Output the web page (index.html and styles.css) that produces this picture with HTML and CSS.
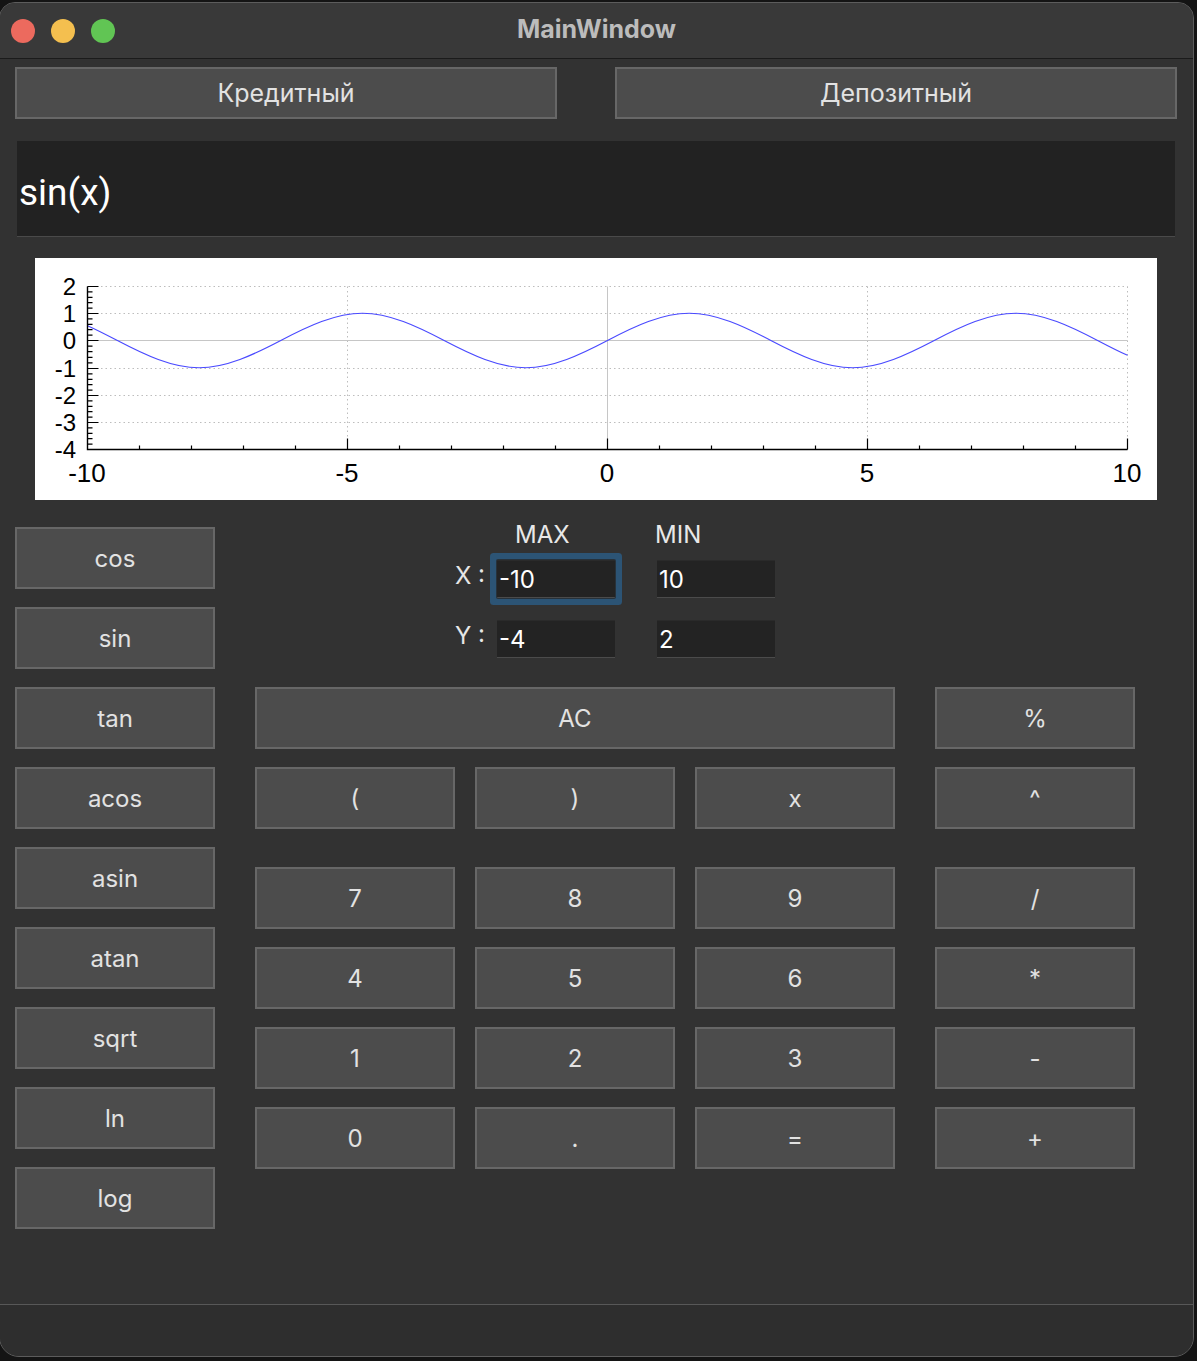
FILE: index.html
```html
<!DOCTYPE html>
<html lang="ru">
<head>
<meta charset="utf-8">
<title>MainWindow</title>
<link rel="stylesheet" href="styles.css">
</head>
<body>
<div class="window">
  <header class="titlebar">
    <div class="lights">
      <span class="light red"></span>
      <span class="light yellow"></span>
      <span class="light green"></span>
    </div>
    <div class="title">MainWindow</div>
    <div></div>
  </header>

  <main class="main">
    <div class="mode-row">
      <button class="btn mode-btn">Кредитный</button>
      <button class="btn mode-btn">Депозитный</button>
    </div>

    <div class="display">sin(x)</div>

    <div class="plot-wrap">
      <svg class="plot" width="1122" height="242" viewBox="0 0 1122 242">
        <path class="grid-dot" d="M52.5 28.5H1092.5M52.5 55.5H1092.5M52.5 110.5H1092.5M52.5 137.5H1092.5M52.5 164.5H1092.5M312.5 28.5V191.5M832.5 28.5V191.5M1092.5 28.5V191.5"/>
        <path class="grid-zero" d="M52.5 82.5H1092.5M572.5 28.5V191.5"/>
        <path class="curve" transform="matrix(52 0 0 -27.25 572.5 82.5)" d="M-10 0.544C-9.8083 0.3831 -9.6165 0.1917 -9.4248 0C-8.9012 -0.5236 -8.3776 -1 -7.854 -1C-7.3304 -1 -6.8068 -0.5236 -6.2832 0C-5.7596 0.5236 -5.236 1 -4.7124 1C-4.1888 1 -3.6652 0.5236 -3.1416 0C-2.618 -0.5236 -2.0944 -1 -1.5708 -1C-1.0472 -1 -0.5236 -0.5236 0 0C0.5236 0.5236 1.0472 1 1.5708 1C2.0944 1 2.618 0.5236 3.1416 0C3.6652 -0.5236 4.1888 -1 4.7124 -1C5.236 -1 5.7596 -0.5236 6.2832 0C6.8068 0.5236 7.3304 1 7.854 1C8.3776 1 8.9012 0.5236 9.4248 0C9.6165 -0.1917 9.8083 -0.3831 10 -0.544"/>
        <path class="axis" d="M52.5 28.5V191.5H1092.5"/>
        <path class="tick" d="M52.5 28.5h11M52.5 55.5h11M52.5 82.5h11M52.5 110.5h11M52.5 137.5h11M52.5 164.5h11
          M52.5 33.9h5M52.5 39.3h5M52.5 44.7h5M52.5 50.1h5
          M52.5 60.9h5M52.5 66.3h5M52.5 71.7h5M52.5 77.1h5
          M52.5 88.1h5M52.5 93.7h5M52.5 99.3h5M52.5 104.9h5
          M52.5 115.9h5M52.5 121.3h5M52.5 126.7h5M52.5 132.1h5
          M52.5 142.9h5M52.5 148.3h5M52.5 153.7h5M52.5 159.1h5
          M52.5 169.9h5M52.5 175.3h5M52.5 180.7h5M52.5 186.1h5
          M312.5 191.5v-11M572.5 191.5v-11M832.5 191.5v-11M1092.5 191.5v-11
          M104.5 191.5v-4M156.5 191.5v-4M208.5 191.5v-4M260.5 191.5v-4
          M364.5 191.5v-4M416.5 191.5v-4M468.5 191.5v-4M520.5 191.5v-4
          M624.5 191.5v-4M676.5 191.5v-4M728.5 191.5v-4M780.5 191.5v-4
          M884.5 191.5v-4M936.5 191.5v-4M988.5 191.5v-4M1040.5 191.5v-4"/>
        <g class="ylabels">
          <text x="41" y="37">2</text>
          <text x="41" y="64">1</text>
          <text x="41" y="91">0</text>
          <text x="41" y="119">-1</text>
          <text x="41" y="146">-2</text>
          <text x="41" y="173">-3</text>
          <text x="41" y="200">-4</text>
        </g>
        <g class="xlabels">
          <text x="52" y="224">-10</text>
          <text x="312" y="224">-5</text>
          <text x="572" y="224">0</text>
          <text x="832" y="224">5</text>
          <text x="1092" y="224">10</text>
        </g>
      </svg>
    </div>

    <div class="lower">
      <div class="funcs">
        <button class="btn fbtn">cos</button>
        <button class="btn fbtn">sin</button>
        <button class="btn fbtn">tan</button>
        <button class="btn fbtn">acos</button>
        <button class="btn fbtn">asin</button>
        <button class="btn fbtn">atan</button>
        <button class="btn fbtn">sqrt</button>
        <button class="btn fbtn">ln</button>
        <button class="btn fbtn">log</button>
      </div>

      <div class="right">
        <div class="params">
          <div class="prow head">
            <span></span>
            <span class="hlabel max">MAX</span>
            <span></span>
            <span class="hlabel min">MIN</span>
          </div>
          <div class="prow xrow">
            <span class="axlabel">X :</span>
            <input class="field focus" value="-10">
            <span></span>
            <input class="field" value="10">
          </div>
          <div class="prow yrow">
            <span class="axlabel">Y :</span>
            <input class="field" value="-4">
            <span></span>
            <input class="field" value="2">
          </div>
        </div>

        <div class="keys top">
          <button class="btn key ac">AC</button>
          <button class="btn key op">%</button>
          <button class="btn key">(</button>
          <button class="btn key">)</button>
          <button class="btn key">x</button>
          <button class="btn key op">^</button>
        </div>

        <div class="keys digits">
          <button class="btn key">7</button>
          <button class="btn key">8</button>
          <button class="btn key">9</button>
          <button class="btn key op">/</button>
          <button class="btn key">4</button>
          <button class="btn key">5</button>
          <button class="btn key">6</button>
          <button class="btn key op">*</button>
          <button class="btn key">1</button>
          <button class="btn key">2</button>
          <button class="btn key">3</button>
          <button class="btn key op">-</button>
          <button class="btn key">0</button>
          <button class="btn key">.</button>
          <button class="btn key">=</button>
          <button class="btn key op">+</button>
        </div>
      </div>
    </div>
  </main>

  <footer class="status"></footer>
</div>
</body>
</html>
```

FILE: styles.css
```css
html, body {
  margin: 0;
  padding: 0;
  background: #141414;
  font-family: Inter, "Noto Sans", "Liberation Sans", sans-serif;
}

.window {
  box-sizing: border-box;
  width: 1195px;
  height: 1355px;
  margin: 2px 0 0 -1px;
  border: 1px solid #5c5c5c;
  border-radius: 16px 16px 20px 20px;
  background: #323232;
  overflow: hidden;
  display: flex;
  flex-direction: column;
}

/* title bar */
.titlebar {
  flex: none;
  height: 55px;
  background: #393939;
  border-bottom: 1px solid #1b1b1b;
  display: grid;
  grid-template-columns: 1fr auto 1fr;
  align-items: center;
}

.lights {
  display: flex;
  gap: 16px;
  padding-left: 11px;
}

.light {
  width: 24px;
  height: 24px;
  border-radius: 50%;
}

.red { background: #ec6a5e; }
.yellow { background: #f4bf4f; }
.green { background: #61c554; }

.title {
  font-weight: 700;
  font-size: 25px;
  color: #bcbcbc;
  padding-bottom: 4px;
}

/* main area */
.main {
  flex: 1;
  display: flex;
  flex-direction: column;
  padding-top: 8px;
}

.btn {
  box-sizing: border-box;
  margin: 0;
  padding: 0;
  border: 2px solid #676767;
  border-radius: 0;
  background: #4c4c4c;
  color: #e2e2e2;
  font-family: Inter, "Noto Sans", "Liberation Sans", sans-serif;
  font-size: 24px;
}

.mode-row {
  display: grid;
  grid-template-columns: 542px 562px;
  column-gap: 58px;
  margin-left: 15px;
}

.mode-btn {
  height: 52px;
  font-size: 25px;
}

.display {
  box-sizing: border-box;
  margin: 22px 0 0 17px;
  width: 1158px;
  height: 96px;
  padding: 8px 0 0 2px;
  background: #222222;
  border-bottom: 1px solid #4a4a4a;
  display: flex;
  align-items: center;
  font-family: Roboto, "Liberation Sans", sans-serif;
  font-size: 37px;
  color: #ffffff;
}

.plot-wrap {
  margin: 21px 0 0 35px;
  width: 1122px;
  height: 242px;
  background: #ffffff;
}

.plot {
  display: block;
}

.grid-dot {
  fill: none;
  stroke: #bdbdbd;
  stroke-width: 1;
  stroke-dasharray: 1.5 3;
}

.grid-zero {
  fill: none;
  stroke: #c6c6c6;
  stroke-width: 1;
}

.curve {
  fill: none;
  stroke: #4a4aff;
  stroke-width: 1.2;
  vector-effect: non-scaling-stroke;
}

.axis {
  fill: none;
  stroke: #000000;
  stroke-width: 1.4;
}

.tick {
  fill: none;
  stroke: #000000;
  stroke-width: 1.2;
}

.ylabels text,
.xlabels text {
  font-family: "Liberation Sans", Arial, sans-serif;
  fill: #000000;
}

.ylabels text {
  text-anchor: end;
  font-size: 24px;
}

.xlabels text {
  text-anchor: middle;
  font-size: 26px;
}

/* lower part */
.lower {
  display: flex;
  align-items: flex-start;
}

.funcs {
  display: flex;
  flex-direction: column;
  gap: 18px;
  width: 200px;
  margin: 27px 0 0 15px;
}

.fbtn {
  height: 62px;
}

.right {
  display: flex;
  flex-direction: column;
  margin: 20px 0 0 40px;
}

.params {
  margin-left: 200px;
  display: flex;
  flex-direction: column;
}

.prow {
  display: grid;
  grid-template-columns: 42px 118px 42px 118px;
  align-items: center;
}

.head { height: 30px; }
.xrow { margin-top: 10px; }
.yrow { margin-top: 22px; }

.hlabel {
  font-size: 24px;
  color: #e8e8e8;
  line-height: 30px;
}

.hlabel.max { padding-left: 18px; }
.hlabel.min { margin-left: -2px; }

.axlabel {
  font-size: 24px;
  color: #e6e6e6;
  padding-bottom: 8px;
}

.field {
  box-sizing: border-box;
  width: 118px;
  height: 38px;
  margin: 0;
  padding: 0 2px;
  border: none;
  border-top: 1px solid #2a2a2a;
  border-bottom: 1px solid #4b4b4b;
  border-radius: 0;
  background: #232323;
  color: #ffffff;
  font-family: Inter, "Noto Sans", "Liberation Sans", sans-serif;
  font-size: 24px;
  outline: none;
}

.field.focus {
  border-radius: 1px;
  box-shadow: 0 0 0 1px #27323b, 0 0 0 7px #2c5475;
}

.keys {
  display: grid;
  grid-template-columns: 200px 200px 200px 220px;
  grid-auto-rows: 62px;
  gap: 18px 20px;
}

.keys.top { margin-top: 29px; }
.keys.digits { margin-top: 38px; }

.key.ac { grid-column: span 3; }

.key.op {
  width: 200px;
  justify-self: end;
}

.status {
  flex: none;
  height: 51px;
  border-top: 1px solid #585858;
  background: #2e2e2e;
}
```
